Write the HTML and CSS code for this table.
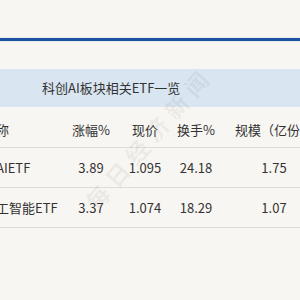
FILE: index.html
```html
<!DOCTYPE html>
<html lang="zh">
<head>
<meta charset="utf-8">
<link rel="stylesheet" href="styles.css">
</head>
<body>
<div class="page">
  <div class="top"></div>
  <div class="rule"></div>
  <div class="gap"></div>
  <div class="table">
    <div class="title">科创AI板块相关ETF一览</div>
    <div class="row head">
      <div class="c name">名称</div>
      <div class="c">涨幅%</div>
      <div class="c">现价</div>
      <div class="c">换手%</div>
      <div class="c">规模（亿份）</div>
    </div>
    <div class="row">
      <div class="c name">创AIETF</div>
      <div class="c">3.89</div>
      <div class="c">1.095</div>
      <div class="c">24.18</div>
      <div class="c">1.75</div>
    </div>
    <div class="row">
      <div class="c name">人工智能ETF</div>
      <div class="c">3.37</div>
      <div class="c">1.074</div>
      <div class="c">18.29</div>
      <div class="c">1.07</div>
    </div>
  </div>
  <div class="wm">每日经济新闻</div>
</div>
</body>
</html>
```
FILE: styles.css
```css
html, body {
  margin: 0;
  padding: 0;
  width: 300px;
  height: 300px;
  overflow: hidden;
  background: #f8f6f2;
}
.page {
  position: relative;
  width: 300px;
  height: 300px;
  overflow: hidden;
  font-family: "Noto Sans CJK SC", "Noto Sans", sans-serif;
  color: #333;
  font-size: 13px;
}
.top { height: 38px; }
.rule {
  height: 3px;
  background: #1d52a3;
  box-shadow: 0 0 1px #6d93cf;
}
.gap { height: 28px; }
.table {
  margin-left: -40px;
  width: 370px;
}
.title {
  height: 38px;
  line-height: 38px;
  background: #d9e5f1;
  padding-left: 82px;
  font-size: 13px;
  color: #333;
}
.row {
  display: grid;
  grid-template-columns: 106px 50px 58px 44px 112px;
  height: 39px;
  border-bottom: 1px solid #dddcd8;
  align-items: center;
}
.head { height: 40px; padding-top: 0; align-items: center; }
.head .c { padding-top: 5px; }
.c {
  text-align: center;
  white-space: nowrap;
  line-height: 18px;
}
.name {
  text-align: left;
  padding-left: 23px;
}
.wm {
  position: absolute;
  left: 62px;
  top: 128px;
  width: 160px;
  text-align: center;
  transform: rotate(-49deg);
  font-size: 23px;
  font-weight: bold;
  letter-spacing: 7px;
  color: rgba(110, 110, 110, 0.09);
  white-space: nowrap;
}
```
